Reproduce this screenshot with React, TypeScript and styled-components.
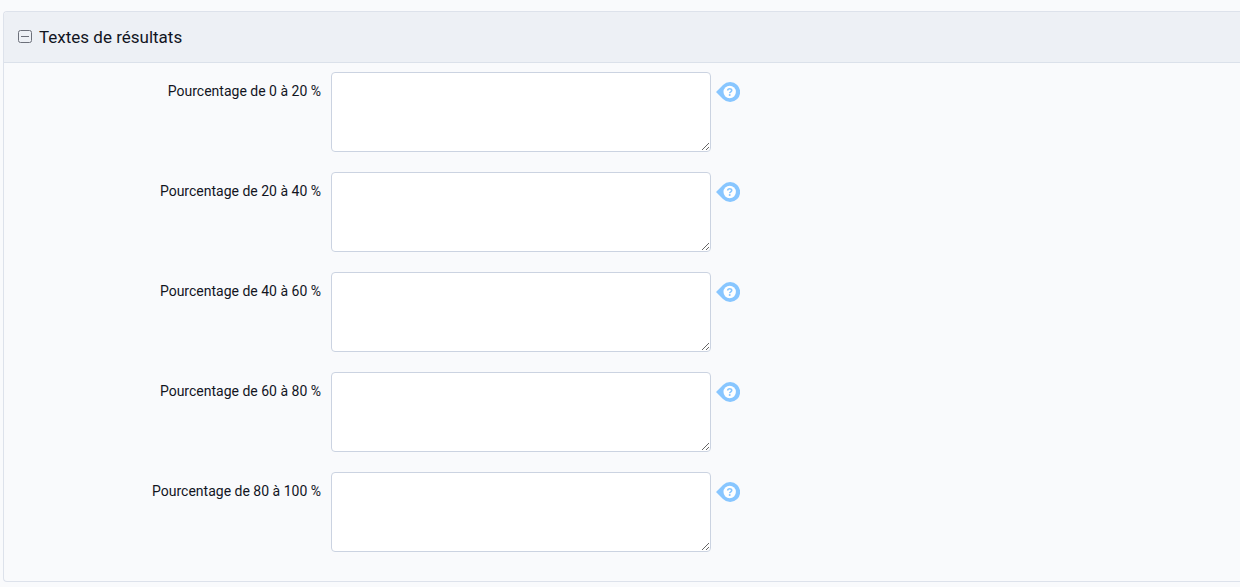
import React, { useState } from "react";
import styled, { createGlobalStyle } from "styled-components";

const GlobalStyle = createGlobalStyle`
  *, *::before, *::after { box-sizing: border-box; }
  body {
    margin: 0;
    background: #f9fafc;
    color: #12151f;
    font-family: Roboto, "Liberation Sans", sans-serif;
    font-size: 14px;
    line-height: 20px;
  }
`;

const Page = styled.main`
  padding: 11px 0 5px 3px;
`;

const Panel = styled.section`
  border: 1px solid #dde2eb;
  border-right: 0;
  border-radius: 4px 0 0 4px;
  overflow: hidden;
`;

const PanelHeader = styled.h2<{ $open: boolean }>`
  margin: 0;
  background: #edf0f5;
  border-bottom: ${({ $open }) => ($open ? "1px solid #dbe1ea" : "0")};
`;

const Toggle = styled.button`
  display: flex;
  align-items: center;
  gap: 7px;
  width: 100%;
  height: 50px;
  padding: 0 14px;
  border: 0;
  background: none;
  color: inherit;
  font: 400 17px/24px Roboto, "Liberation Sans", sans-serif;
  text-align: left;
  cursor: pointer;
`;

const ToggleIcon = styled.svg`
  flex: none;
  width: 14px;
  height: 14px;
`;

const Fields = styled.div`
  display: flex;
  flex-direction: column;
  gap: 20px;
  padding: 9px 0 29px;
`;

const Field = styled.div`
  display: flex;
  align-items: flex-start;
`;

const Label = styled.label`
  flex: none;
  width: 327px;
  padding: 9px 10px 0 0;
  text-align: right;
`;

const TextArea = styled.textarea`
  display: block;
  width: 380px;
  height: 80px;
  padding: 8px;
  border: 1px solid #cbd3e1;
  border-radius: 4px;
  background: #fff;
  color: inherit;
  font: inherit;
  resize: both;
`;

const HelpButton = styled.button`
  flex: none;
  margin: 10px 0 0 5px;
  padding: 0;
  border: 0;
  background: none;
  cursor: help;
`;

const HelpDrawing = styled.svg`
  display: block;
  width: 24px;
  height: 20px;
`;

function HelpIcon() {
  return (
    <HelpDrawing viewBox="0 0 24 20" aria-hidden="true">
      <path d="M0 10 L7 3 A10 10 0 1 1 7 17 Z" fill="#88c6ff" />
      <circle cx="13.7" cy="10" r="6.2" fill="#fff" />
      <path
        d="M11.7 8.6 C11.7 6.2 15.7 6.2 15.7 8.5 C15.7 9.8 13.7 9.8 13.7 11.3"
        fill="none"
        stroke="#88c6ff"
        strokeWidth="1.6"
      />
      <circle cx="13.7" cy="13.1" r="1" fill="#88c6ff" />
    </HelpDrawing>
  );
}

const ranges = ["0 à 20", "20 à 40", "40 à 60", "60 à 80", "80 à 100"];

export default function App() {
  const [open, setOpen] = useState(true);
  return (
    <>
      <GlobalStyle />
      <Page>
        <Panel>
          <PanelHeader $open={open}>
            <Toggle type="button" aria-expanded={open} onClick={() => setOpen(!open)}>
              <ToggleIcon viewBox="0 0 14 14" fill="none" stroke="#6c707a" aria-hidden="true">
                <rect x="0.5" y="0.5" width="13" height="12" rx="2" />
                <path d={open ? "M3 6.5 H11" : "M3 6.5 H11 M7 3 V10"} />
              </ToggleIcon>
              Textes de résultats
            </Toggle>
          </PanelHeader>
          {open && (
            <Fields>
              {ranges.map((range, i) => (
                <Field key={range}>
                  <Label htmlFor={`result-${i}`}>Pourcentage de {range} %</Label>
                  <TextArea id={`result-${i}`} />
                  <HelpButton type="button" aria-label={`Aide : ${range} %`}>
                    <HelpIcon />
                  </HelpButton>
                </Field>
              ))}
            </Fields>
          )}
        </Panel>
      </Page>
    </>
  );
}
